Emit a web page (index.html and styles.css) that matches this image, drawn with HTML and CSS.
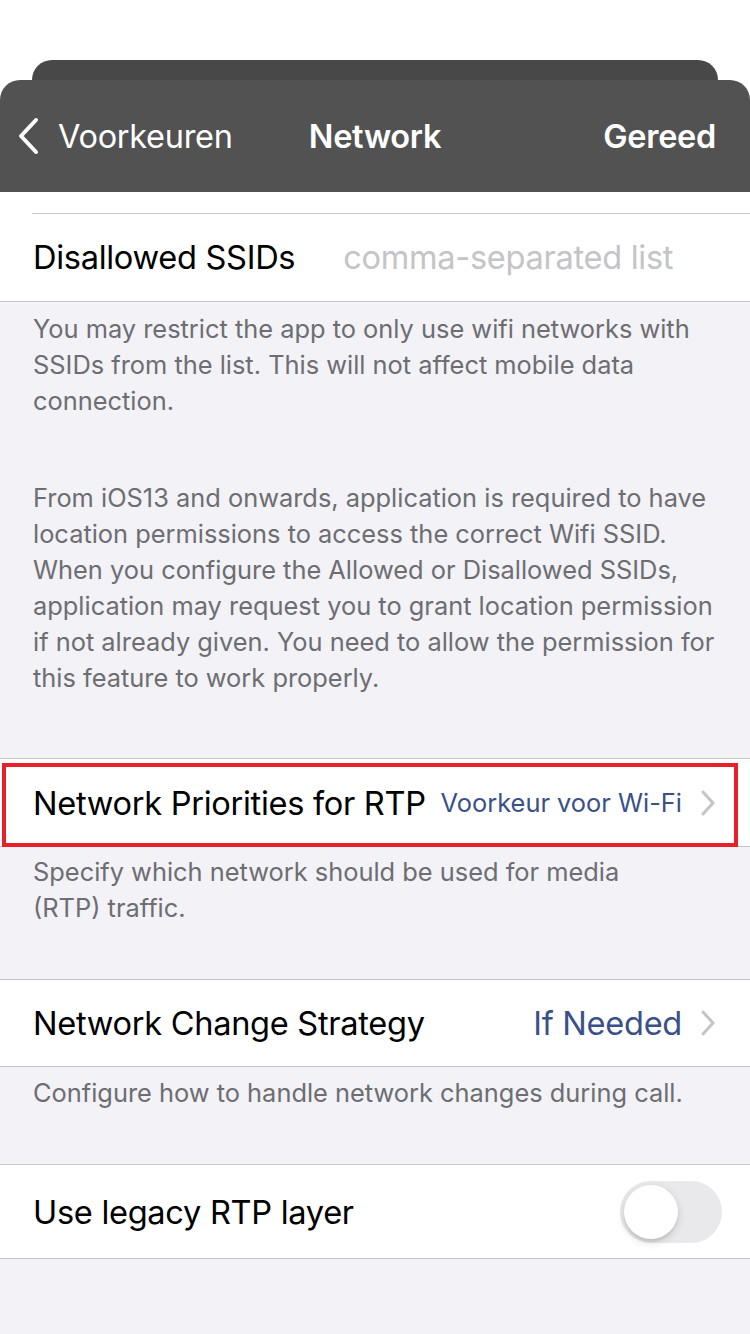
FILE: index.html
```html
<!DOCTYPE html>
<html>
<head>
<meta charset="utf-8">
<link rel="stylesheet" href="styles.css">
</head>
<body>
<div class="screen">
  <div class="top">
    <div class="sheet-back"></div>
    <div class="navbar">
      <div class="nav-left">
        <svg class="back-chev" width="24" height="38" viewBox="0 0 24 38"><path d="M20 3 L5 19 L20 35" fill="none" stroke="#fff" stroke-width="4" stroke-linecap="round" stroke-linejoin="round"/></svg>
        <span class="nav-back">Voorkeuren</span>
      </div>
      <div class="nav-title">Network</div>
      <div class="nav-done">Gereed</div>
    </div>
  </div>
  <div class="content">
    <div class="group first">
      <div class="cell-tail"></div>
      <div class="row row-ssid inset-top">
        <span class="label">Disallowed SSIDs</span>
        <span class="placeholder">comma-separated list</span>
      </div>
    </div>
    <div class="footer footer-long">
      <p>You may restrict the app to only use wifi networks with SSIDs from the list. This will not affect mobile data connection.</p>
      <p class="para2">From iOS13 and onwards, application is required to have location permissions to access the correct Wifi SSID. When you configure the Allowed or Disallowed SSIDs, application may request you to grant location permission if not already given. You need to allow the permission for this feature to work properly.</p>
    </div>
    <div class="group">
      <div class="row row-rtp highlighted">
        <span class="label">Network Priorities for RTP</span>
        <span class="value value-small">Voorkeur voor Wi-Fi</span>
        <svg class="chev" width="16" height="26" viewBox="0 0 16 26"><path d="M3 2 L13 13 L3 24" fill="none" stroke="#c4c4c7" stroke-width="3" stroke-linecap="round" stroke-linejoin="round"/></svg>
      </div>
    </div>
    <div class="footer footer-rtp">
      <p>Specify which network should be used for media<br>(RTP) traffic.</p>
    </div>
    <div class="group">
      <div class="row row-strategy">
        <span class="label">Network Change Strategy</span>
        <span class="value">If Needed</span>
        <svg class="chev" width="16" height="26" viewBox="0 0 16 26"><path d="M3 2 L13 13 L3 24" fill="none" stroke="#c4c4c7" stroke-width="3" stroke-linecap="round" stroke-linejoin="round"/></svg>
      </div>
    </div>
    <div class="footer footer-strategy">
      <p>Configure how to handle network changes during call.</p>
    </div>
    <div class="group">
      <div class="row row-toggle">
        <span class="label">Use legacy RTP layer</span>
        <div class="toggle"><div class="knob"></div></div>
      </div>
    </div>
  </div>
</div>
</body>
</html>
```

FILE: styles.css
```css
* { box-sizing: border-box; }
html, body { margin: 0; padding: 0; }
body {
  width: 750px;
  height: 1334px;
  overflow: hidden;
  background: #f2f2f7;
  font-family: Inter, "Liberation Sans", sans-serif;
  -webkit-font-smoothing: antialiased;
}
.screen {
  width: 750px;
  height: 1334px;
  background: #f2f2f7;
}
.top {
  background: #fff;
  padding-top: 60px;
}
.sheet-back {
  height: 20px;
  margin: 0 32px;
  background: #484848;
  border-radius: 20px 20px 0 0;
}
.navbar {
  position: relative;
  height: 112px;
  background: #525252;
  border-radius: 20px 20px 0 0;
  display: flex;
  align-items: center;
  justify-content: space-between;
  padding: 0 34px 0 16px;
  color: #fff;
  font-size: 32.5px;
  letter-spacing: -0.3px;
}
.nav-left {
  display: flex;
  align-items: center;
  gap: 18px;
}
.back-chev { display: block; }
.nav-back { font-weight: 400; }
.nav-title {
  position: absolute;
  left: 0;
  right: 0;
  text-align: center;
  font-weight: 600;
  pointer-events: none;
}
.nav-done { font-weight: 600; }
.content { background: #f2f2f7; }
.group {
  background: #fff;
  border-top: 1px solid #c6c6c8;
  border-bottom: 1px solid #c6c6c8;
}
.group.first { border-top: none; }
.cell-tail { height: 21px; }
.row {
  position: relative;
  height: 88px;
  display: flex;
  align-items: center;
  padding: 0 34px 0 33px;
  font-size: 32.6px;
  letter-spacing: -0.3px;
  color: #000;
}
.row-rtp { height: 87px; }
.row-strategy { height: 86px; }
.inset-top::before {
  content: "";
  position: absolute;
  top: 0;
  left: 32px;
  right: 0;
  border-top: 1px solid #c6c6c8;
}
.label { flex: 0 0 auto; }
.placeholder {
  margin-left: 48px;
  color: #c4c4c6;
}
.value {
  margin-left: auto;
  color: #3a5088;
}
.value-small {
  font-size: 25.4px;
  letter-spacing: 0;
}
.chev {
  margin-left: 18px;
  display: block;
}
.highlighted::after {
  content: "";
  position: absolute;
  left: 2px;
  right: 12px;
  top: 4px;
  bottom: -1px;
  border: 4px solid #e8202a;
  pointer-events: none;
}
.row-toggle {
  height: 93px;
  padding-right: 28px;
}
.toggle {
  margin-left: auto;
  width: 102px;
  height: 62px;
  border-radius: 31px;
  background: #e9e9eb;
  position: relative;
}
.knob {
  position: absolute;
  top: 4px;
  left: 4px;
  width: 54px;
  height: 54px;
  border-radius: 50%;
  background: #fff;
  box-shadow: 0 3px 8px rgba(0,0,0,0.15), 0 3px 1px rgba(0,0,0,0.06);
}
.footer {
  padding: 8px 33px 53px 33px;
  color: #6d6d72;
  font-size: 25.4px;
  line-height: 36px;
  letter-spacing: 0;
}
.footer p { margin: 0; }
.footer-long { padding-top: 9px; padding-bottom: 62px; }
.footer-rtp { padding-top: 7px; }
.footer-strategy { padding-top: 8px; }
.para2 { margin-top: 61px !important; }
```
